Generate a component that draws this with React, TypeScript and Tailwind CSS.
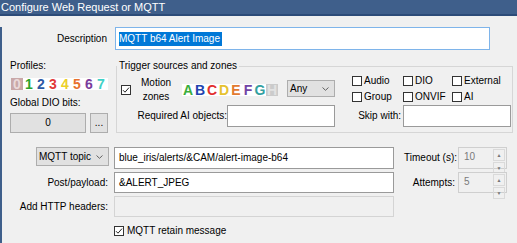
import type { ReactNode } from "react";

const profiles = [
  { t: "0", c: "text-[#ead9d9]", bg: "bg-[#c9a8a8]" },
  { t: "1", c: "text-[#2ba12b]", bg: "" },
  { t: "2", c: "text-[#2c58a4]", bg: "" },
  { t: "3", c: "text-[#e23a3a]", bg: "" },
  { t: "4", c: "text-[#ecd02a]", bg: "" },
  { t: "5", c: "text-[#e8722e]", bg: "" },
  { t: "6", c: "text-[#7b3c9c]", bg: "" },
  { t: "7", c: "text-[#3fd1c6]", bg: "" },
];

const zones = [
  { t: "A", c: "text-[#3cae3c]", bg: "" },
  { t: "B", c: "text-[#2244b0]", bg: "" },
  { t: "C", c: "text-[#e22e2e]", bg: "" },
  { t: "D", c: "text-[#e6c230]", bg: "" },
  { t: "E", c: "text-[#e27a30]", bg: "" },
  { t: "F", c: "text-[#7244a6]", bg: "" },
  { t: "G", c: "text-[#33a0a0]", bg: "" },
  { t: "H", c: "text-[#e2e2e2]", bg: "bg-[#cbcbcb]" },
];

function Strip({ items, w }: { items: typeof profiles; w: string }) {
  return (
    <div className={`flex h-[12px] bg-white ${w}`}>
      {items.map((it) => (
        <span
          key={it.t}
          className={`w-[12px] h-[12px] flex items-center justify-center text-[14px] font-bold leading-none ${it.c} ${it.bg}`}
        >
          {it.t}
        </span>
      ))}
    </div>
  );
}

function Check({ checked }: { checked?: boolean }) {
  return (
    <span className="w-[10px] h-[10px] border border-[#333] bg-white flex items-center justify-center shrink-0">
      {checked && (
        <svg width="8" height="8" viewBox="0 0 8 8">
          <path d="M1 4.2 L3 6.2 L7 1.6" fill="none" stroke="#222" strokeWidth="1" />
        </svg>
      )}
    </span>
  );
}

function Chevron() {
  return (
    <svg width="7" height="4" viewBox="0 0 7 4" className="shrink-0">
      <path d="M0.5 0.5 L3.5 3.3 L6.5 0.5" fill="none" stroke="#555" strokeWidth="0.9" />
    </svg>
  );
}

function Combo({ label, w }: { label: string; w: string }) {
  return (
    <div
      className={`h-full ${w} bg-[#e1e1e1] border border-[#adadad] flex items-center justify-between pl-[2px] pr-[5px]`}
    >
      <span>{label}</span>
      <Chevron />
    </div>
  );
}

function Edit({ w, h, children, disabled }: { w: string; h: string; children?: ReactNode; disabled?: boolean }) {
  return (
    <div
      className={`${w} ${h} border flex items-center pl-[4px] ${
        disabled ? "bg-[#f0f0f0] border-[#d4d4d4]" : "bg-white border-[#9a9a9a]"
      }`}
    >
      {children}
    </div>
  );
}

function Spin({ value }: { value: string }) {
  return (
    <div className="w-[49px] h-full border border-[#cfcfcf] bg-[#f0f0f0] flex">
      <span className="flex-1 pl-[5px] pt-[4px] text-[#7a7a7a]">{value}</span>
      <div className="w-[14px] flex flex-col gap-[1px] p-[1px]">
        <span className="flex-1 border border-[#dadada] flex items-center justify-center text-[5px] text-[#777]">▲</span>
        <span className="flex-1 border border-[#dadada] flex items-center justify-center text-[5px] text-[#777]">▼</span>
      </div>
    </div>
  );
}

export default function App() {
  return (
    <div className="w-[517px] h-[243px] overflow-hidden bg-[#f0f0f0] font-['Liberation_Sans',Arial,sans-serif] text-[10px] leading-[10px] text-black">
      <div className="h-[16px] bg-[#3f5f8b] border-b-2 border-[#2c4b78] text-white text-[11px] leading-[14px] pl-[1px]">
        Configure Web Request or MQTT
      </div>
      <div className="h-[227px] border-l-2 border-[#3f5f8b]">
        {/* description */}
        <div className="flex items-center h-[23px] mt-[11px]">
          <span className="w-[106px] text-right pr-[1px]">Description</span>
          <div className="ml-[7px] w-[375px] h-[23px] bg-white border border-[#7eb4ea] flex items-center pl-[3px]">
            <span className="bg-[#0078d7] text-white leading-[14px] pr-[2px]">MQTT b64 Alert Image</span>
          </div>
        </div>

        {/* profiles + trigger group */}
        <div className="flex mt-[11px]">
          <div className="w-[114px] pl-[8px] flex flex-col">
            <span>Profiles:</span>
            <div className="mt-[7px] ml-[1px]">
              <Strip items={profiles} w="w-[97px]" />
            </div>
            <span className="mt-[8px]">Global DIO bits:</span>
            <div className="flex mt-[5px] h-[20px]">
              <div className="w-[76px] h-full bg-[#e1e1e1] border border-[#adadad] flex items-center justify-center">0</div>
              <div className="ml-[4px] w-[18px] h-full bg-[#e1e1e1] border border-[#adadad] flex items-end justify-center pb-[4px]">
                ...
              </div>
            </div>
          </div>

          <fieldset className="w-[397px] h-[72px] border border-[#d6d6d6]">
            <legend className="px-[2px] leading-[10px]">Trigger sources and zones</legend>
            <div className="flex items-center h-[28px] mt-[5px]">
              <span className="ml-[4px]">
                <Check checked />
              </span>
              <div className="ml-[5px] w-[40px] text-center leading-[14px]">
                Motion
                <br />
                zones
              </div>
              <div className="ml-[6px]">
                <Strip items={zones} w="w-[96px]" />
              </div>
              <div className="ml-[9px] h-[17px] -mt-[3px]">
                <Combo label="Any" w="w-[48px]" />
              </div>
              <div className="ml-[17px] grid grid-cols-[51px_49px_48px] gap-y-[6px] -mt-[2px]">
                {["Audio", "DIO", "External", "Group", "ONVIF", "AI"].map((l) => (
                  <div key={l} className="flex items-center gap-[2px] h-[10px]">
                    <Check />
                    <span>{l}</span>
                  </div>
                ))}
              </div>
            </div>
            <div className="flex items-center mt-[1px] h-[22px]">
              <span className="w-[110px] text-right">Required AI objects:</span>
              <Edit w="w-[108px]" h="h-[22px]" />
              <span className="w-[66px] text-right">Skip with:</span>
              <div className="ml-[2px]">
                <Edit w="w-[108px]" h="h-[22px]" />
              </div>
            </div>
          </fieldset>
        </div>

        {/* mqtt rows */}
        <div className="flex items-start mt-[14px] h-[22px]">
          <div className="ml-[34px] h-[19px]">
            <Combo label="MQTT topic" w="w-[73px]" />
          </div>
          <div className="ml-[5px]">
            <Edit w="w-[280px]" h="h-[22px]">blue_iris/alerts/&amp;CAM/alert-image-b64</Edit>
          </div>
          <span className="w-[63px] text-right self-center">Timeout (s):</span>
          <div className="ml-[1px] h-[22px]">
            <Spin value="10" />
          </div>
        </div>

        <div className="flex items-center mt-[3px] h-[21px]">
          <span className="w-[106px] text-right">Post/payload:</span>
          <div className="ml-[6px]">
            <Edit w="w-[280px]" h="h-[21px]">&amp;ALERT_JPEG</Edit>
          </div>
          <span className="w-[61px] text-right">Attempts:</span>
          <div className="ml-[3px] h-[21px]">
            <Spin value="5" />
          </div>
        </div>

        <div className="flex items-center mt-[3px] h-[21px]">
          <span className="w-[106px] text-right">Add HTTP headers:</span>
          <div className="ml-[6px]">
            <Edit w="w-[280px]" h="h-[21px]" disabled />
          </div>
        </div>

        <div className="flex items-center mt-[9px] ml-[112px] gap-[3px]">
          <Check checked />
          <span>MQTT retain message</span>
        </div>
      </div>
    </div>
  );
}
